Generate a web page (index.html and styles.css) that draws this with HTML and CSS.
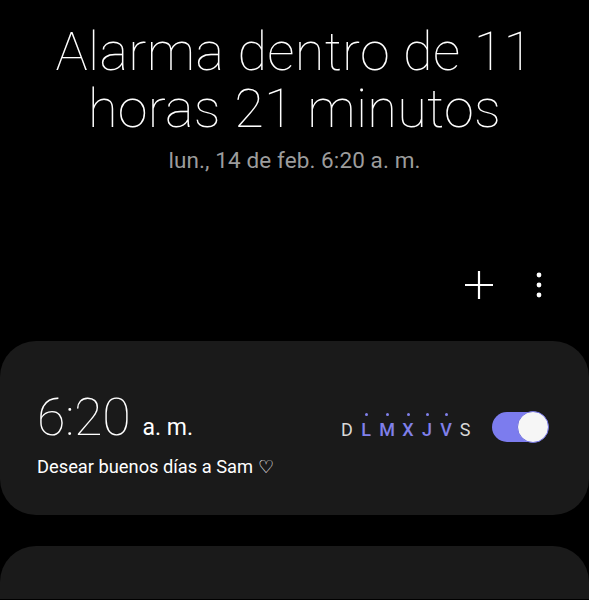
FILE: index.html
```html
<!DOCTYPE html>
<html lang="es">
<head>
<meta charset="utf-8">
<link rel="stylesheet" href="styles.css">
</head>
<body>
<div class="screen">
  <header class="hero">
    <h1 class="title">Alarma dentro de 11<br>horas 21 minutos</h1>
    <p class="subtitle">lun., 14 de feb. 6:20 a. m.</p>
  </header>
  <div class="toolbar">
    <button class="icon-btn plus" aria-label="Añadir">
      <svg width="30" height="30" viewBox="0 0 30 30"><path d="M15 1V29M1 15H29" stroke="#fff" stroke-width="2.2" fill="none"/></svg>
    </button>
    <button class="icon-btn more" aria-label="Más">
      <svg width="8" height="26" viewBox="0 0 8 26"><circle cx="4" cy="3" r="2.4" fill="#fff"/><circle cx="4" cy="13" r="2.4" fill="#fff"/><circle cx="4" cy="23" r="2.4" fill="#fff"/></svg>
    </button>
  </div>
  <section class="card">
    <div class="card-left">
      <div class="time"><span class="hm">6:20</span><span class="ampm">a. m.</span></div>
      <div class="label">Desear buenos días a Sam ♡</div>
    </div>
    <div class="card-right">
      <div class="days">
        <span class="day">D</span>
        <span class="day on">L</span>
        <span class="day on">M</span>
        <span class="day on">X</span>
        <span class="day on">J</span>
        <span class="day on">V</span>
        <span class="day">S</span>
      </div>
      <div class="switch"><div class="knob"></div></div>
    </div>
  </section>
  <section class="card card-empty"></section>
</div>
</body>
</html>
```
FILE: styles.css
```css
* { box-sizing: border-box; }
html, body { margin: 0; padding: 0; background: #000; }
body {
  font-family: Roboto, "Noto Sans", sans-serif;
  color: #fff;
  width: 589px;
  height: 600px;
  overflow: hidden;
}
.screen { display: flex; flex-direction: column; }
.hero { text-align: center; padding-top: 23px; }
.title {
  margin: 0;
  font-family: Roboto, sans-serif;
  font-weight: 270;
  font-size: 54px;
  line-height: 57px;
  letter-spacing: 0.3px;
}
.subtitle {
  margin: 10px 0 0;
  font-size: 22.5px;
  color: #9c9c9c;
  line-height: 26px;
  letter-spacing: 0.1px;
}
.toolbar {
  display: flex;
  justify-content: flex-end;
  align-items: center;
  gap: 41px;
  padding: 0 46px 0 0;
  margin-top: 97px;
  height: 30px;
}
.icon-btn {
  background: none; border: 0; padding: 0; margin: 0;
  display: flex; align-items: center; justify-content: center;
}
.card {
  margin-top: 41px;
  background: #1a1a1a;
  border-radius: 36px;
  height: 174px;
  flex: none;
  display: flex;
  justify-content: space-between;
  align-items: flex-start;
  padding: 49px 41px 0 37px;
}
.card-left { display: flex; flex-direction: column; }
.time { display: flex; align-items: baseline; line-height: 56px; }
.hm {
  font-family: Roboto, sans-serif;
  font-weight: 250; font-size: 52px; letter-spacing: -0.3px;
}
.ampm { font-size: 23px; margin-left: 12px; }
.label { font-size: 18.3px; line-height: 22px; margin-top: 0; }
.card-right { display: flex; align-items: center; gap: 21px; margin-top: 22px; }
.days { display: flex; gap: 7px; padding-top: 4px; }
.day {
  position: relative;
  font-size: 18px;
  line-height: 21px;
  color: #d8d8d8;
  width: 12px;
  text-align: center;
}
.day.on { color: #8080ea; font-weight: 500; }
.day:nth-child(3) { width: 16px; }
.day.on::before {
  content: "";
  position: absolute;
  left: 50%;
  top: -6px;
  width: 3px; height: 3px;
  margin-left: -1.5px;
  border-radius: 50%;
  background: #8080ea;
}
.switch {
  width: 56px; height: 30px;
  border-radius: 15px;
  background: #7c7cee;
  position: relative;
}
.knob {
  position: absolute;
  right: -1px; top: -1px;
  width: 32px; height: 32px;
  border-radius: 50%;
  background: #f6f6f6;
  border: 1.5px solid #7070e0;
}
.card-empty { margin-top: 31px; height: 53px; border-radius: 36px 36px 0 0; }
```
